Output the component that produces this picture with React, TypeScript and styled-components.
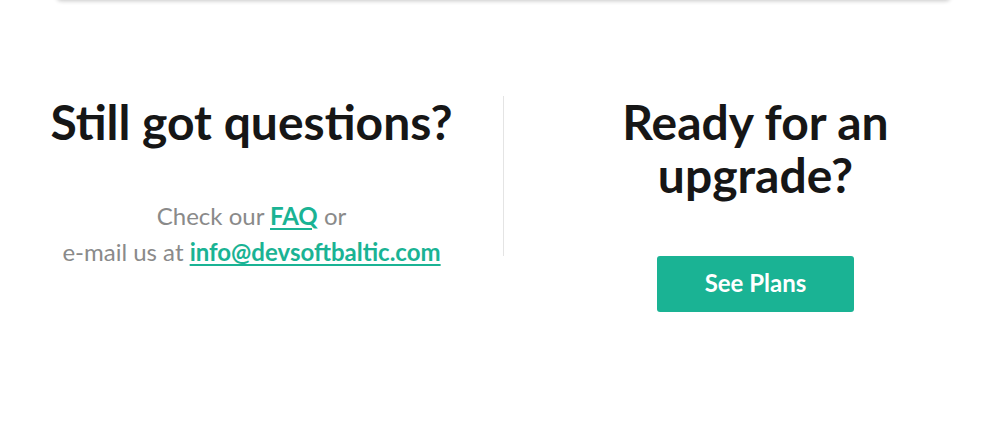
import React from "react";
import styled, { createGlobalStyle } from "styled-components";

const Global = createGlobalStyle`
  html, body { margin: 0; padding: 0; background: #fff; }
  body { font-family: Lato, "Open Sans", sans-serif; }
`;

const Page = styled.div`
  width: 1007px;
  height: 440px;
  overflow: hidden;
  background: #fff;
`;

const TopCard = styled.div`
  margin: -10px 57px 0 57px;
  height: 10px;
  background: #fff;
  border-radius: 0 0 4px 4px;
  box-shadow: 0 1px 4px rgba(0, 0, 0, 0.22);
`;

const Section = styled.section`
  display: grid;
  grid-template-columns: 1fr 1px 1fr;
  margin-top: 96px;
`;

const Column = styled.div`
  display: flex;
  flex-direction: column;
  align-items: center;
  text-align: center;
`;

const Divider = styled.div`
  width: 1px;
  height: 160px;
  background: #e4e4e4;
`;

const Heading = styled.h2`
  margin: 0;
  font-size: 48px;
  line-height: 52.8px;
  font-weight: 700;
  color: #161616;
`;

const Text = styled.p`
  margin: 49px 0 0 0;
  font-size: 24px;
  line-height: 36px;
  color: #8a8a8a;
`;

const Link = styled.a`
  color: #1ab394;
  font-weight: 700;
  text-decoration: underline;
  text-underline-offset: 3px;
`;

const Button = styled.a`
  display: flex;
  align-items: center;
  justify-content: center;
  box-sizing: border-box;
  margin-top: 54px;
  width: 197px;
  height: 56px;
  padding-bottom: 3px;
  border-radius: 3px;
  background: #1ab394;
  color: #fff;
  font-size: 24px;
  font-weight: 700;
  text-decoration: none;
`;

export default function App() {
  return (
    <Page>
      <Global />
      <TopCard />
      <Section>
        <Column>
          <Heading>Still got questions?</Heading>
          <Text>
            Check our <Link href="#">FAQ</Link> or
            <br />
            e-mail us at <Link href="#">info@devsoftbaltic.com</Link>
          </Text>
        </Column>
        <Divider />
        <Column>
          <Heading>
            Ready for an
            <br />
            upgrade?
          </Heading>
          <Button href="#">See Plans</Button>
        </Column>
      </Section>
    </Page>
  );
}
